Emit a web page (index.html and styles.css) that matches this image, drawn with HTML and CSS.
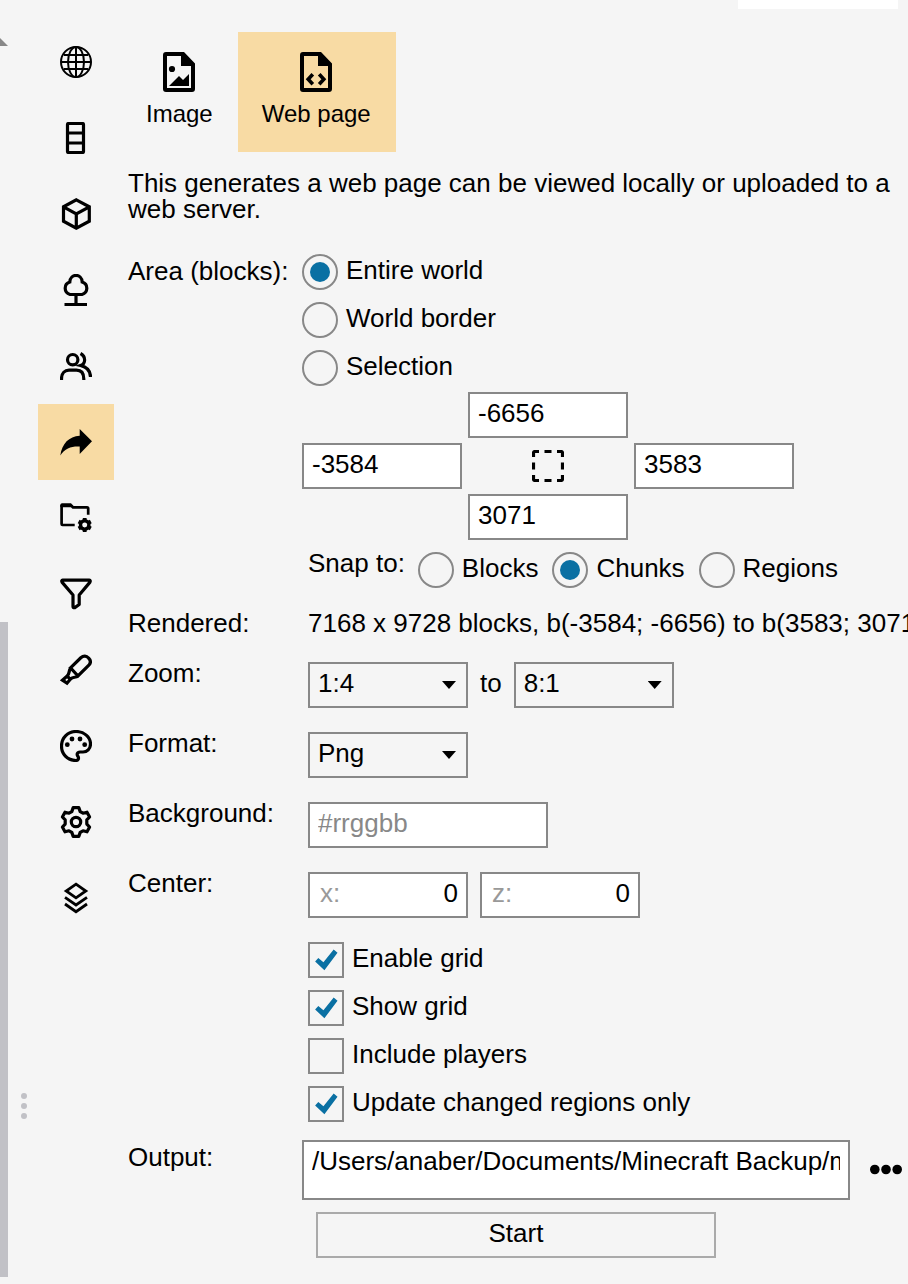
FILE: index.html
```html
<!DOCTYPE html>
<html lang="en">
<head>
<meta charset="utf-8">
<title>Export</title>
<meta name="viewport" content="width=device-width">
<link rel="stylesheet" href="styles.css">
</head>
<body>
<div class="app">
  <div class="scroller"><span class="scroller-arrow"></span><span class="scroller-thumb"></span></div>
  <div class="splitter"><i></i><i></i><i></i></div>
  <nav class="nav">
    <button class="nav-item" type="button" aria-label="World"><svg class="icon thin" viewBox="0 0 32 32"><circle cx="16" cy="16" r="15"/><ellipse cx="16" cy="16" rx="8" ry="15"/><path d="M16 1V31M1 16H31M4 9H28M4 23H28"/></svg></button>
    <button class="nav-item" type="button" aria-label="Dimensions"><svg class="icon" viewBox="0 0 32 32"><rect x="7.5" y="1.5" width="16" height="29" rx="1"/><path d="M7 11H24M7 21H24"/></svg></button>
    <button class="nav-item" type="button" aria-label="Blocks"><svg class="icon" viewBox="0 0 32 32"><path d="M16.3 1.8L29.3 8.8V23.2L16.3 30.2L3.5 23.2V8.8ZM3.5 8.8L16.3 16L29.3 8.8M16.3 16V30"/></svg></button>
    <button class="nav-item" type="button" aria-label="Biomes"><svg class="icon" viewBox="0 0 32 32"><path d="M10 20.5A6.5 6.5 0 0 1 9.8 8C10.2-.8 21.8-.8 22.2 8A6.5 6.5 0 0 1 22 20.5ZM16 20.5V30M4.5 30.5H27"/></svg></button>
    <button class="nav-item" type="button" aria-label="Players"><svg class="icon" viewBox="0 0 32 32"><circle cx="12.7" cy="9.7" r="5.2"/><path d="M1.5 30V29C1.5 23 5 20.2 9 20.2H16.5C21 20.2 23.8 23 23.8 29V30M20.5 3.5C26 6.5 26 13.5 20.5 15.5C27 17 30.5 20 30.5 27"/></svg></button>
    <button class="nav-item active" type="button" aria-label="Export" aria-current="page"><svg class="icon" viewBox="0 0 32 32"><path class="solid" d="M19.7 3L32 15.3L19.7 28V20.5C12 20 5 22 .3 29.5C2 17.5 9 10.5 19.7 9.8Z"/></svg></button>
    <button class="nav-item" type="button" aria-label="Folder settings"><svg class="icon" viewBox="0 0 32 32"><path d="M14.7 23H2.5Q1.6 23 1.6 22V4H11.5L13 5.4H27Q28.2 5.4 28.2 6.6V12.7" stroke-width="2.7"/><path class="solid" d="M.4 5V3Q.4 1.3 2 1.3H11L14.5 5Z"/><circle cx="24.7" cy="23" r="4.2" stroke-width="3.4"/><path d="M24.7 16V19M24.7 27V30M18.6 19.5L21.3 21M28.1 25L30.8 26.5M18.6 26.5L21.3 25M28.1 21L30.8 19.5" stroke-width="3.8"/></svg></button>
    <button class="nav-item" type="button" aria-label="Filter"><svg class="icon" viewBox="0 0 32 32"><path stroke-linejoin="round" d="M2.8 2.2H29.2Q31 2.4 29.8 4.4L19.2 17V26.5L14.8 29.6Q13 30 13 28.5V17L2.2 4.4Q1 2.4 2.8 2.2Z"/></svg></button>
    <button class="nav-item" type="button" aria-label="Highlight"><svg class="icon" viewBox="0 0 32 32"><path d="M10.5 13.8L20.8 3.8C23.5 1.5 26.5 1.8 28.5 4C30.8 6.3 31 9 28.6 11.5L18 22ZM10.5 13.8C8.5 17.5 9.8 19.5 7.2 22L10.3 25.2C13.5 22.5 15 24 18 22M7.2 22L2.5 26.2L7 29.2L10.3 25.2"/></svg></button>
    <button class="nav-item" type="button" aria-label="Colours"><svg class="icon" viewBox="0 0 32 32"><path d="M16 30.5C7 30.5 1.5 23.8 1.5 16C1.5 7.5 8 1.5 16 1.5C24 1.5 30.5 7 30.5 14C30.5 19 27 22 23 22H20C17 22 16.5 24.5 18 26.5C19 28 18.5 30.5 16 30.5Z"/><g class="solid"><circle cx="7.3" cy="14.7" r="2.4"/><circle cx="12" cy="9" r="2.4"/><circle cx="20" cy="9" r="2.4"/><circle cx="24.7" cy="14.7" r="2.4"/></g></svg></button>
    <button class="nav-item" type="button" aria-label="Settings"><svg class="icon" viewBox="0 0 32 32"><path stroke-linejoin="round" d="M13.2 1.6H18.8L20.2 5.6L23 7.2L27 6.2L29.6 11L26.8 13.9V18.1L29.6 21L27 25.8L23 24.8L20.2 26.4L18.8 30.4H13.2L11.8 26.4L9 24.8L5 25.8L2.4 21L5.2 18.1V13.9L2.4 11L5 6.2L9 7.2L11.8 5.6Z"/><circle cx="16" cy="16" r="4.7"/></svg></button>
    <button class="nav-item" type="button" aria-label="Layers"><svg class="icon medium" viewBox="0 0 32 32"><path d="M16 2.2L25.8 9L16 15.8L6.2 9ZM5 15.4L16 23L27 15.4M5 22L16 29.7L27 22"/></svg></button>
  </nav>
  <main class="main">
    <div class="topbar"><div class="topbar-field"></div></div>
    <div class="tabs">
      <button class="tab" type="button"><svg class="tab-icon" viewBox="0 -4 32 48"><path fill-rule="evenodd" d="M3 0H21L32 11.5V37Q32 40 29 40H3Q0 40 0 37V3Q0 0 3 0ZM4 4V36H28V14H18V4Z"/><circle cx="9" cy="17" r="3.1"/><path d="M6 34L16 24L20 28L26 22V34Z"/></svg>Image</button>
      <button class="tab active" type="button"><svg class="tab-icon" viewBox="0 -4 32 48"><path fill-rule="evenodd" d="M3 0H21L32 11.5V37Q32 40 29 40H3Q0 40 0 37V3Q0 0 3 0ZM4 4V36H28V14H18V4Z"/><path d="M12.8 22.3L8.2 27.3L12.8 32.3M19.2 22.3L23.8 27.3L19.2 32.3" fill="none" stroke="#000" stroke-width="3.6"/></svg>Web page</button>
    </div>
    <form class="form">
      <p class="intro">This generates a web page can be viewed locally or uploaded to a web server.</p>

      <div class="row area" role="group" aria-labelledby="area">
        <span class="label tall" id="area">Area (blocks):</span>
        <div class="stack">
          <label class="option"><input class="radio" type="radio" name="area" checked>Entire world</label>
          <label class="option"><input class="radio" type="radio" name="area">World border</label>
          <label class="option"><input class="radio" type="radio" name="area">Selection</label>
        </div>
      </div>
      <div class="row bounds-row">
        <div class="bounds">
          <input class="box north" type="text" value="-6656" aria-label="North">
          <input class="box west" type="text" value="-3584" aria-label="West">
          <button class="pick" type="button" aria-label="Select area"><svg class="icon" viewBox="0 0 32 32"><path d="M1.5 7V3Q1.5 1.5 3 1.5H7M12.5 1.5H19.5M25 1.5H29Q30.5 1.5 30.5 3V7M30.5 12.5V19.5M30.5 25V29Q30.5 30.5 29 30.5H25M19.5 30.5H12.5M7 30.5H3Q1.5 30.5 1.5 29V25M1.5 19.5V12.5"/></svg></button>
          <input class="box east" type="text" value="3583" aria-label="East">
          <input class="box south" type="text" value="3071" aria-label="South">
        </div>
      </div>
      <div class="row snap-row">
        <div class="inset snap" role="group" aria-labelledby="snap">
          <span class="label" id="snap">Snap to:</span>
          <div class="options">
            <label class="option"><input class="radio" type="radio" name="snap">Blocks</label>
            <label class="option"><input class="radio" type="radio" name="snap" checked>Chunks</label>
            <label class="option"><input class="radio" type="radio" name="snap">Regions</label>
          </div>
        </div>
      </div>
      <div class="row rendered"><span>Rendered:</span><span class="inset">7168 x 9728 blocks, b(-3584; -6656) to b(3583; 3071)</span></div>

      <div class="row">
        <label class="label" for="zoom-from">Zoom:</label>
        <div class="inset pair">
          <span class="select"><select class="box" id="zoom-from"><option>1:4</option></select></span>
          <label class="between" for="zoom-to">to</label>
          <span class="select"><select class="box" id="zoom-to"><option>8:1</option></select></span>
        </div>
      </div>
      <div class="row">
        <label class="label" for="format">Format:</label>
        <div class="inset"><span class="select"><select class="box" id="format"><option>Png</option></select></span></div>
      </div>
      <div class="row">
        <label class="label" for="background">Background:</label>
        <div class="inset"><input class="box wide" id="background" type="text" placeholder="#rrggbb"></div>
      </div>
      <div class="row">
        <span class="label">Center:</span>
        <div class="inset pair">
          <label class="box coord"><span>x:</span><input type="text" value="0"></label>
          <label class="box coord"><span>z:</span><input type="text" value="0"></label>
        </div>
      </div>
      <div class="row">
        <div class="inset stack checks">
          <label class="option"><input class="check" type="checkbox" checked>Enable grid</label>
          <label class="option"><input class="check" type="checkbox" checked>Show grid</label>
          <label class="option"><input class="check" type="checkbox">Include players</label>
          <label class="option"><input class="check" type="checkbox" checked>Update changed regions only</label>
        </div>
      </div>
      <div class="row output">
        <label class="label tall" for="output">Output:</label>
        <div class="path">
          <input class="box path-field" id="output" type="text" value="/Users/anaber/Documents/Minecraft Backup/map">
          <button class="pick" type="button" aria-label="Browse"><svg class="icon" viewBox="0 0 32 32"><g class="solid"><circle cx="4.8" cy="15.5" r="4.8"/><circle cx="16" cy="15.5" r="4.8"/><circle cx="27.2" cy="15.5" r="4.8"/></g></svg></button>
        </div>
      </div>
      <div class="row start-row"><button class="box start" type="button">Start</button></div>
    </form>
  </main>
</div>
</body>
</html>
```
FILE: styles.css
```css
* {
  box-sizing: border-box;
}

body {
  margin: 0;
  background: #f5f5f5;
  color: #000;
  font: 26px/26px "Liberation Sans", Arial, sans-serif;
}

button,
input,
select {
  font: inherit;
  color: inherit;
  margin: 0;
}

button {
  border: 0;
  padding: 0;
  background: none;
}

.app {
  display: flex;
  min-height: 100vh;
  overflow: hidden;
}

/* Left edge: neighbouring panel's scrollbar and the drag handle */
.scroller {
  display: flex;
  flex-direction: column;
  width: 8px;
  padding: 38px 0 7px;
}

.scroller-arrow {
  height: 8px;
  background: #888;
  clip-path: polygon(0 0, 100% 100%, 0 100%);
}

.scroller-thumb {
  flex: 1;
  margin-top: 576px;
  background: #c1c1c6;
}

.splitter {
  display: flex;
  flex-direction: column;
  justify-content: flex-end;
  align-items: center;
  gap: 4px;
  width: 30px;
  padding: 0 0 165px 2px;
}

.splitter i {
  width: 6px;
  height: 6px;
  border-radius: 50%;
  background: #c1c1c6;
}

.nav {
  display: flex;
  flex-direction: column;
  width: 76px;
  padding-top: 24px;
}

.nav-item {
  display: grid;
  place-items: center;
  height: 76px;
}

.active {
  background: #f8dba4;
}

.icon {
  display: block;
  width: 32px;
  height: 32px;
  fill: none;
  stroke: #000;
  stroke-width: 3.2;
}

.thin {
  stroke-width: 2;
}

.medium {
  stroke-width: 2.8;
}

.solid {
  fill: #000;
  stroke: none;
}

.main {
  flex: 1;
  min-width: 0;
}

.topbar {
  display: flex;
  justify-content: flex-end;
  height: 32px;
  padding-right: 10px;
}

.topbar-field {
  width: 160px;
  height: 9px;
  background: #fff;
}

.tabs {
  display: flex;
  padding-left: 8px;
}

.tab {
  display: flex;
  flex-direction: column;
  align-items: center;
  padding: 16px 25px 20px 24px;
  font-size: 24px;
  line-height: 36px;
}

.tab-icon {
  width: 32px;
  height: 48px;
}

.form {
  display: flex;
  flex-direction: column;
  gap: 24px;
  padding: 18px 6px 26px 14px;
}

.intro {
  margin: 0;
}

.row {
  display: grid;
  grid-template-columns: 174px 1fr;
  align-items: start;
}

.row > :only-child {
  grid-column: 2;
}

.label {
  line-height: 22px;
}

.label.tall {
  line-height: 34px;
}

.inset {
  padding-left: 6px;
}

.area {
  margin-top: 8px;
}

.stack {
  display: flex;
  flex-direction: column;
  align-items: flex-start;
  gap: 12px;
}

.option {
  display: flex;
  gap: 8px;
  line-height: 32px;
}

.radio,
.check {
  appearance: none;
  display: grid;
  place-items: center;
  flex: none;
  width: 36px;
  height: 36px;
  border: 2px solid #888;
}

.radio {
  border-radius: 50%;
}

.radio:checked::before {
  content: "";
  width: 20px;
  height: 20px;
  border-radius: 50%;
  background: #0a70a3;
}

.check:checked::before {
  content: "";
  width: 32px;
  height: 32px;
  background: #0a70a3;
  clip-path: polygon(16% 55%, 26% 44%, 42% 57%, 74% 17%, 86% 27%, 45% 82%);
}

.box {
  display: block;
  width: 160px;
  height: 46px;
  padding: 0 8px 4px;
  border: 2px solid #888;
  border-radius: 0;
  background: #fff;
}

.box::placeholder {
  color: #888;
  opacity: 1;
}

.bounds-row {
  margin-top: -18px;
}

.bounds {
  display: grid;
  grid-template-columns: repeat(3, 160px);
  grid-template-areas: ". n ." "w pick e" ". s .";
  gap: 5px 6px;
  place-items: center;
}

.north { grid-area: n; }
.west { grid-area: w; }
.east { grid-area: e; }
.south { grid-area: s; }
.bounds .pick { grid-area: pick; }

.snap-row {
  margin-top: -12px;
}

.snap {
  display: flex;
  gap: 13px;
}

.options {
  display: flex;
  gap: 14px;
}

.rendered {
  margin: -2px 0 2px;
  white-space: nowrap;
}

.pair {
  display: flex;
  gap: 12px;
}

.between {
  line-height: 42px;
}

.select {
  position: relative;
  display: block;
  width: 160px;
}

.select::after {
  content: "";
  position: absolute;
  top: 19px;
  right: 12px;
  width: 14px;
  height: 8px;
  background: #000;
  clip-path: polygon(0 0, 100% 0, 50% 100%);
  pointer-events: none;
}

.select .box {
  appearance: none;
  background: transparent;
  line-height: 34px;
}

.wide {
  width: 240px;
}

.coord {
  display: flex;
  align-items: center;
}

.coord span {
  padding-left: 2px;
  color: #999;
}

.coord input {
  flex: 1;
  min-width: 0;
  padding: 0;
  border: 0;
  background: none;
  text-align: right;
}

.output {
  margin-top: -6px;
}

.path {
  display: flex;
  align-items: center;
  gap: 20px;
}

.path-field {
  flex: 1;
  min-width: 0;
  height: 60px;
  padding-bottom: 18px;
}

.start-row {
  margin-top: -12px;
}

.start {
  width: 400px;
  margin-left: 14px;
  border-color: #aaa;
  background: transparent;
}
```
